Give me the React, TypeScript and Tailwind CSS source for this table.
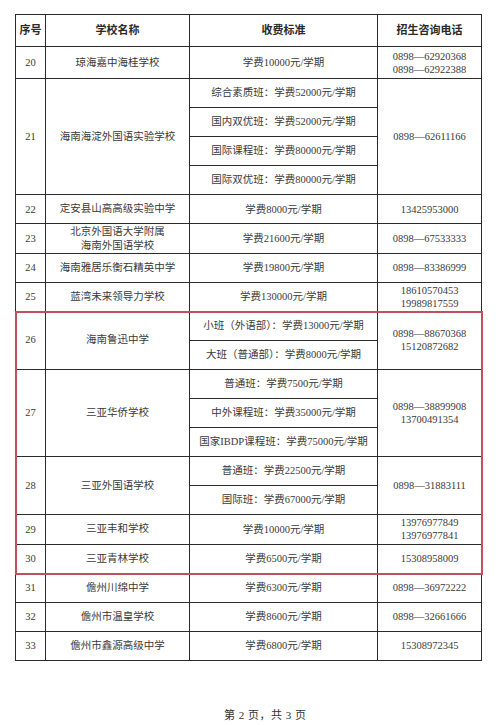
import React from "react";

type Row = {
  num: string;
  name: string[];
  fees: string[];
  phones: string[];
  h?: number;
};

const LINE = "border-[#2b2b2b]";

function TableRow({ r }: { r: Row }) {
  const h = r.h ?? 29.1;
  return (
    <div className="flex">
      <div className={`w-[30px] shrink-0 flex items-center justify-center border-r border-b ${LINE}`}>
        {r.num}
      </div>
      <div className={`w-[144px] shrink-0 flex flex-col items-center justify-center border-r border-b ${LINE} leading-[14px]`}>
        {r.name.map((n, i) => (
          <div key={i}>{n}</div>
        ))}
      </div>
      <div className="w-[188px] shrink-0 flex flex-col">
        {r.fees.map((f, i) => (
          <div
            key={i}
            style={{ height: h }}
            className={`flex items-center justify-center border-r border-b ${LINE} whitespace-nowrap`}
          >
            {f}
          </div>
        ))}
      </div>
      <div className={`w-[104px] shrink-0 flex flex-col items-center justify-center border-r border-b ${LINE} leading-[13px]`}>
        {r.phones.map((p, i) => (
          <div key={i}>{p}</div>
        ))}
      </div>
    </div>
  );
}

const before: Row[] = [
  { num: "20", name: ["琼海嘉中海桂学校"], fees: ["学费10000元/学期"], phones: ["0898—62920368", "0898—62922388"], h: 32 },
  {
    num: "21",
    name: ["海南海淀外国语实验学校"],
    fees: [
      "综合素质班：学费52000元/学期",
      "国内双优班：学费52000元/学期",
      "国际课程班：学费80000元/学期",
      "国际双优班：学费80000元/学期",
    ],
    phones: ["0898—62611166"],
  },
  { num: "22", name: ["定安县山高高级实验中学"], fees: ["学费8000元/学期"], phones: ["13425953000"] },
  { num: "23", name: ["北京外国语大学附属", "海南外国语学校"], fees: ["学费21600元/学期"], phones: ["0898—67533333"] },
  { num: "24", name: ["海南雅居乐衡石精英中学"], fees: ["学费19800元/学期"], phones: ["0898—83386999"] },
  { num: "25", name: ["蓝湾未来领导力学校"], fees: ["学费130000元/学期"], phones: ["18610570453", "19989817559"] },
];

const group: Row[] = [
  {
    num: "26",
    name: ["海南鲁迅中学"],
    fees: ["小班（外语部）：学费13000元/学期", "大班（普通部）：学费8000元/学期"],
    phones: ["0898—88670368", "15120872682"],
  },
  {
    num: "27",
    name: ["三亚华侨学校"],
    fees: ["普通班：学费7500元/学期", "中外课程班：学费35000元/学期", "国家IBDP课程班：学费75000元/学期"],
    phones: ["0898—38899908", "13700491354"],
  },
  {
    num: "28",
    name: ["三亚外国语学校"],
    fees: ["普通班：学费22500元/学期", "国际班：学费67000元/学期"],
    phones: ["0898—31883111"],
  },
  { num: "29", name: ["三亚丰和学校"], fees: ["学费10000元/学期"], phones: ["13976977849", "13976977841"] },
  { num: "30", name: ["三亚青林学校"], fees: ["学费6500元/学期"], phones: ["15308958009"] },
];

const after: Row[] = [
  { num: "31", name: ["儋州川绵中学"], fees: ["学费6300元/学期"], phones: ["0898—36972222"] },
  { num: "32", name: ["儋州市温皇学校"], fees: ["学费8600元/学期"], phones: ["0898—32661666"] },
  { num: "33", name: ["儋州市鑫源高级中学"], fees: ["学费6800元/学期"], phones: ["15308972345"] },
];

export default function App() {
  return (
    <div
      className="w-[500px] h-[725px] bg-white text-[#3a3a3a] text-[10.5px] overflow-hidden"
      style={{ fontFamily: '"Liberation Serif", "Noto Sans CJK SC", serif' }}
    >
      <div className="pt-[14px] pl-[15px]">
        <div className={`w-[467px] border-l border-t ${LINE}`}>
          <div className="flex h-[32px] font-bold text-[11px] text-[#2a2a2a]">
            <div className={`w-[30px] shrink-0 flex items-center justify-center border-r border-b ${LINE}`}>序号</div>
            <div className={`w-[144px] shrink-0 flex items-center justify-center border-r border-b ${LINE}`}>学校名称</div>
            <div className={`w-[188px] shrink-0 flex items-center justify-center border-r border-b ${LINE}`}>收费标准</div>
            <div className={`w-[104px] shrink-0 flex items-center justify-center border-r border-b ${LINE}`}>招生咨询电话</div>
          </div>
          {before.map((r) => (
            <TableRow key={r.num} r={r} />
          ))}
          <div className="outline-2 outline-[#c0505c] -outline-offset-1">
            {group.map((r) => (
              <TableRow key={r.num} r={r} />
            ))}
          </div>
          {after.map((r) => (
            <TableRow key={r.num} r={r} />
          ))}
        </div>
      </div>
      <div className="mt-[46px] pl-[224px] text-[11px] text-[#333] tracking-[0.5px]">第 2 页，共 3 页</div>
    </div>
  );
}
